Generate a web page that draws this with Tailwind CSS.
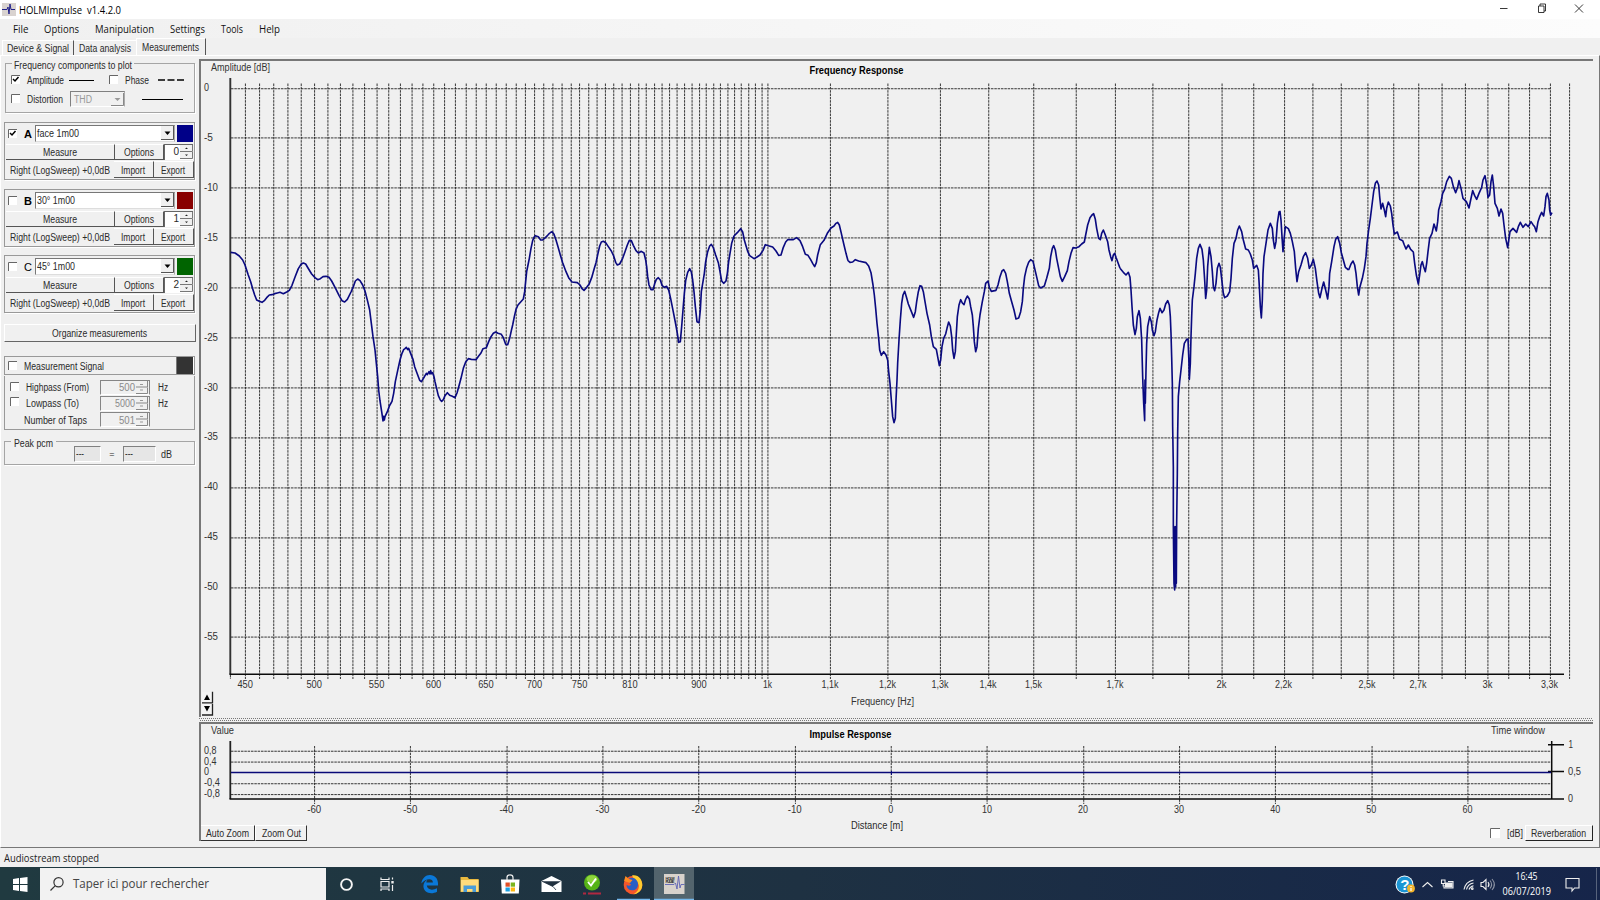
<!DOCTYPE html>
<html lang="fr">
<head>
<meta charset="utf-8">
<title>HOLMImpulse v1.4.2.0</title>
<script src="https://cdn.jsdelivr.net/npm/@tailwindcss/browser@4"></script>
</head>
<body class="w-[1600px] h-[900px] overflow-hidden bg-[#f0f0f0] text-[#2a2a2a] font-['Liberation_Sans',sans-serif] text-[10px] leading-[12px] flex flex-col whitespace-nowrap">

<header class="h-[19px] bg-white flex items-center shrink-0 font-['Open_Sans',sans-serif] text-black">
  <svg class="ml-[2px] w-[14px] h-[13px]" viewBox="0 0 14 13"><rect width="14" height="13" fill="#d9d3d0"/><path d="M0 6.500H5L6 4L7 11L8 1L9 6.500H13" fill="none" stroke="#22228a"/></svg>
  <span data-w="102" class="ml-[3px]">HOLMImpulse&nbsp; v1.4.2.0</span>
  <svg class="ml-auto w-[100px] h-[19px]" viewBox="1500 0 100 19" fill="none" stroke="#222" stroke-width=".9"><path d="M1499.500 8.500h8M1538.500 6h5.500v6.500h-5.500zM1540 6v-2h5.500v7h-1.500M1575 4.500l8 8M1583 4.500l-8 8"/></svg>
</header>

<nav class="h-[19px] shrink-0 flex items-center bg-linear-to-r from-[#f0f0f0] to-[#fcfcfc] font-['Open_Sans',sans-serif] text-[#111] pl-[13px]">
  <span data-w="15.500" class="w-[31px]">File</span><span data-w="35" class="w-[51px]">Options</span><span data-w="59" class="w-[75px]">Manipulation</span><span data-w="35" class="w-[51px]">Settings</span><span data-w="22" class="w-[38px]">Tools</span><span data-w="21">Help</span>
</nav>

<div class="h-[17px] shrink-0 flex items-end pl-[2px]">
  <div class="h-[15px] w-[72px] border-r border-[#555] border-l border-l-white border-t border-t-white pl-[4px] pt-px"><span data-w="62">Device &amp; Signal</span></div>
  <div class="h-[15px] w-[62px] border-t border-white pl-[5px] pt-px"><span data-w="52">Data analysis</span></div>
  <div class="h-[17px] w-[70px] border-r-[1.500px] border-[#555] border-l border-l-white border-t border-t-white pl-[5px] pt-[2px]"><span data-w="57">Measurements</span></div>
</div>

<main class="h-[793px] shrink-0 flex border-t border-white border-l border-l-white border-b-[1.500px] border-b-[#777] border-r-[1.500px] border-r-[#777]">
  <aside class="w-[198px] shrink-0 pl-[4px]">
    <section class="mt-[7px] w-[190px] h-[50px] border border-[#a5a5a5] shadow-[1px_1px_0_#fff] flex flex-col">
      <div class="h-[8px] pl-[6px] flex items-center"><span class="bg-[#f0f0f0] px-[2px] -mt-[7px]"><span data-w="118">Frequency components to plot</span></span></div>
      <div class="h-[16px] flex items-center pl-[5px]">
        <svg class="w-[9px] h-[9px] -mt-px" viewBox="0 0 9 9"><path d="M0 0h9v9H0z" fill="#fff"/><path d="M.5 9V.5H9" fill="none" stroke="#666"/><path d="M2 4l2 2 3.500-4" fill="none" stroke="#000" stroke-width="1.500"/></svg>
        <span data-w="37" class="ml-[7px] w-[42px]">Amplitude</span><i class="w-[25px] h-px bg-black"></i>
        <svg class="w-[9px] h-[9px] ml-[15px] -mt-[2px]" viewBox="0 0 9 9"><path d="M0 0h9v9H0z" fill="#fff"/><path d="M.5 9V.5H9" fill="none" stroke="#666"/></svg>
        <span data-w="24" class="ml-[7px] w-[33px]">Phase</span>
        <svg class="w-[26px] h-[2px]" viewBox="0 0 26 2"><path d="M0 1h26" stroke="#000" stroke-width="1.500" stroke-dasharray="7 2.500"/></svg>
      </div>
      <div class="h-[22px] flex items-center pl-[5px]">
        <svg class="w-[9px] h-[9px] -mt-px" viewBox="0 0 9 9"><path d="M0 0h9v9H0z" fill="#fff"/><path d="M.5 9V.5H9" fill="none" stroke="#666"/></svg>
        <span data-w="36" class="ml-[7px] w-[43px]">Distortion</span>
        <span class="w-[55px] h-[16px] border-[1.500px] border-[#808080] border-b-white border-r-[#aaa] flex items-center text-[#999] pl-[3px]"><span data-w="18">THD</span><svg class="ml-auto w-[13px] h-[13px]" viewBox="0 0 13 13"><path d="M0 12.500h12.500V0" fill="none" stroke="#888"/><path d="M3.500 5h6l-3 3z" fill="#999"/></svg></span>
        <i class="w-[41px] h-px bg-black ml-[17px]"></i>
      </div>
    </section>

    <section class="mt-[9px] -ml-px w-[191px] h-[58px] border border-[#999] shadow-[1px_1px_0_#fff]" data-card="A"></section>
    <section class="mt-[9px] -ml-px w-[191px] h-[58px] border border-[#999] shadow-[1px_1px_0_#fff]" data-card="B"></section>
    <section class="mt-[8px] -ml-px w-[191px] h-[58px] border border-[#999] shadow-[1px_1px_0_#fff]" data-card="C"></section>

    <button class="mt-[11px] -ml-px w-[192px] h-[18px] border-b-[1.500px] border-r-[1.500px] border-[#666] border-t border-t-white border-l border-l-white flex items-center justify-center pr-[2px]"><span data-w="95">Organize measurements</span></button>

    <section class="mt-[14px] -ml-px w-[191px] h-[19px] border border-[#999] flex items-center pl-[3px]">
      <svg class="w-[9px] h-[9px] -mt-px" viewBox="0 0 9 9"><path d="M0 0h9v9H0z" fill="#fff"/><path d="M.5 9V.5H9" fill="none" stroke="#666"/></svg>
      <span data-w="80" class="ml-[7px]">Measurement Signal</span>
      <i class="ml-auto h-[17px] w-[18px] bg-[#333] border-l-[1.500px] border-[#777] border-r border-r-white"></i>
    </section>
    <section class="mt-px -ml-px w-[191px] h-[54px] border border-t-0 border-[#999] flex flex-col pt-[3px]">
      <div class="h-[16px] flex items-center pl-[5px]"><svg class="w-[9px] h-[9px] -mt-[2px]" viewBox="0 0 9 9"><path d="M0 0h9v9H0z" fill="#fff"/><path d="M.5 9V.5H9" fill="none" stroke="#666"/></svg><span data-w="63" class="ml-[7px] w-[74px]">Highpass (From)</span><span class="w-[50px] h-[15px] border-[1.500px] border-[#858585] border-b-white flex items-center justify-end text-[#8a8a8a]"><span data-w="16">500</span><svg class="w-[14px] h-[13px]" viewBox="0 0 14 13"><path d="M1 6h11.500V0M1 12.500h11.500V6.500" fill="none" stroke="#888"/><path d="M5 3.500h3M5 9h3" stroke="#999"/></svg></span><span data-w="10" class="ml-[8px]">Hz</span></div>
      <div class="h-[16px] flex items-center pl-[5px]"><svg class="w-[9px] h-[9px] -mt-[3px]" viewBox="0 0 9 9"><path d="M0 0h9v9H0z" fill="#fff"/><path d="M.5 9V.5H9" fill="none" stroke="#666"/></svg><span data-w="53" class="ml-[7px] w-[74px]">Lowpass (To)</span><span class="w-[50px] h-[15px] border-[1.500px] border-[#858585] border-b-white flex items-center justify-end text-[#8a8a8a]"><span data-w="20">5000</span><svg class="w-[14px] h-[13px]" viewBox="0 0 14 13"><path d="M1 6h11.500V0M1 12.500h11.500V6.500" fill="none" stroke="#888"/><path d="M5 3.500h3M5 9h3" stroke="#999"/></svg></span><span data-w="10" class="ml-[8px]">Hz</span></div>
      <div class="h-[17px] flex items-center pl-[19px]"><span data-w="63" class="w-[76px]">Number of Taps</span><span class="w-[50px] h-[15px] border-[1.500px] border-[#858585] border-b-white flex items-center justify-end text-[#8a8a8a]"><span data-w="16">501</span><svg class="w-[14px] h-[13px]" viewBox="0 0 14 13"><path d="M1 6h11.500V0M1 12.500h11.500V6.500" fill="none" stroke="#888"/><path d="M5 3.500h3M5 9h3" stroke="#999"/></svg></span></div>
    </section>

    <section class="mt-[11px] -ml-px w-[191px] h-[24px] border border-[#a5a5a5] shadow-[1px_1px_0_#fff] flex flex-col">
      <div class="h-[3px] pl-[6px] flex items-center"><span class="bg-[#f0f0f0] px-[3px] -mt-[2px]"><span data-w="39">Peak pcm</span></span></div>
      <div class="h-[17px] flex items-center pl-[69px]">
        <span class="w-[27px] h-[16px] bg-[#e6e6e6] border-[1.500px] border-[#808080] border-b-white border-r-white pl-[1px]"><span data-w="8">---</span></span>
        <span class="w-[22px] text-center pt-px text-[9px]">=</span>
        <span class="w-[33px] h-[16px] bg-[#e6e6e6] border-[1.500px] border-[#808080] border-b-white border-r-white pl-[1px]"><span data-w="8">---</span></span>
        <span data-w="11" class="ml-[5px]">dB</span>
      </div>
    </section>
  </aside>

  <div class="w-[1394px] mt-[3px] flex flex-col">
    <div class="h-[658px] border-t-2 border-l-2 border-[#777]">
      <svg class="block w-[1392px] h-[656px]" viewBox="201 61 1392 656">
        <g id="fgrid" transform="scale(.833333)" stroke="#111" stroke-width="1" fill="none"></g>
        <path d="M230.300 78V674.500" stroke="#333" stroke-width="1.900"/><path d="M229.500 674.300H1564" stroke="#0a0a0a" stroke-width="1.600"/>
        <g fill="none" stroke="#0a0a80" stroke-width="4.900" stroke-linejoin="round">
          <polyline transform="translate(220 210) scale(.33333)" points="32,127 45,129 58,138 68,150 75,165 84,193 92,215 98,236 104,255 110,270 118,274 126,277 134,271 140,263 148,255 156,254 164,251 172,249 180,247 190,251 200,246 208,241 216,226 226,199 235,176 243,163 250,159 257,162 264,174 275,192 285,203 293,209 301,206 309,200 318,199 327,202 335,213 347,236 357,256 366,272 374,276 382,268 393,246 400,230 406,213 413,207 420,212 428,225 435,243 443,274 449,300 454,340 459,380 465,420 469,460 473,500 476,540 480,573 485,605 488,625 489,633 491,619 493,630 495,620 502,605 508,588 516,574 521,550 526,515 533,482 540,450 546,430 551,419 555,416 559,412 563,419 566,415 573,433 579,448 584,470 592,492 599,511 604,515 610,506 615,497 619,490 622,494 627,485 630,492 632,482 635,491 638,488 642,500 645,515 650,536 655,557 661,570 665,574 670,569 675,557 682,548 689,556 697,559 705,563 711,549 717,527 723,505 730,475 737,456 745,446 754,448 768,449 776,438 783,429 789,416 799,413 806,395 813,380 820,370 827,366 834,370 844,373 850,383 857,403 863,404 869,385 874,362 878,345 883,320 888,298 894,285 902,276 910,267 914,245 917,215 920,185 924,165 928,145 933,115 938,92 942,82 946,77 955,80 962,90 968,90 976,83 983,76 990,68"/>
          <polyline transform="translate(500 210) scale(.33333)" points="150,68 156,65 162,73 168,90 174,110 181,135 188,158 198,185 207,205 216,216 232,218 240,225 246,236 252,241 260,232 267,223 275,203 283,175 288,158 294,130 299,108 304,96 310,94 317,98 325,110 334,123 341,138 347,157 352,165 359,162 368,145 375,125 382,105 388,91 394,92 400,106 408,122 415,129 424,124 432,129 437,150 440,170 443,200 447,225 453,239 459,239 464,221 469,208 475,203 481,210 486,226 493,232 500,229 506,240 512,266 519,301 527,342 532,370 536,397 541,395 545,350 549,300 553,250 557,212 563,187 569,176 574,186 578,210 582,245 586,290 591,335 597,338 601,300 604,245 609,215 613,190 617,155 623,125 629,108 634,103 640,113 647,135 655,158 661,190 665,213 671,220 678,213 682,190 686,155 690,130 695,100 702,78 712,68 722,56 728,66 733,90 738,107 743,124 749,137 762,146 771,141 780,135 789,121 796,104 805,107 818,111 828,123 836,136 843,135 850,112 857,96 863,89 880,89 890,83 900,92 908,110 916,133 924,136 932,149 938,160 944,170 949,158 953,135 961,104 972,91 983,68 993,54 1002,48 1008,40 1013,37 1018,45 1024,70 1032,105 1038,130 1044,152"/>
          <polyline transform="translate(800 200) scale(.33333)" points="144,182 150,187 158,186 166,179 176,183 198,188 206,198 213,218 219,255 223,285 227,325 231,370 236,415 239,450 244,466 251,455 258,465 263,480 266,515 270,550 274,600 278,650 282,668 286,655 288,600 291,540 293,490 297,420 301,360 305,310 309,285 314,274 319,290 325,312 333,332 341,352 346,335 350,305 355,275 360,257 365,259 370,275 375,305 381,340 389,375 394,410 400,440 409,448 414,475 418,497 422,480 426,440 431,415 437,402 441,385 446,366 451,378 455,410 458,450 462,475 466,455 469,400 472,350 477,315 482,299 487,309 492,314 497,298 502,288 508,297 512,320 517,345 520,380 523,425 527,455 531,440 535,385 540,345 547,305 553,275 557,250 564,243 568,262 574,274 588,271 594,255 600,230 606,213 611,209 617,220 622,245 628,280 635,305 642,330 648,357 656,354 662,335 667,305 670,265 674,230 680,203 686,187 692,179 699,184 704,205 711,235 716,257 722,264 733,258 740,235 748,205 752,170 757,145 761,137 766,150 770,175 776,205 781,230 787,244 794,230 802,212 807,185 813,160 819,143 827,144 837,140 845,132 853,126 857,105 863,75 870,53 876,45 881,41 886,58 890,85 896,115 901,119 905,100 910,90 916,105 923,125 927,150 932,170 936,182 940,165 944,160 948,172 960,205"/>
          <polyline transform="translate(1080 190) scale(.33333)" points="120,235 130,247 138,255 145,247 150,262 153,300 156,350 160,405 165,434 169,415 172,380 177,362 181,385 185,450 188,560 191,640 194,692 195,570 196,640 198,540 200,460 203,410 209,380 214,395 217,420 222,437 226,425 231,390 236,368 240,355 246,368 252,360 257,342 263,332 268,345 271,380 273,430 275,500 277,580 278,710 280,830 280,1010 282,1180 284,1200 285,1010 287,1190 288,1010 289,1180 290,1000 292,850 293,730 295,620 299,575 303,540 308,495 313,460 320,448 324,447 327,520 328,568 331,520 333,440 335,380 337,330 342,290 346,250 350,205 355,175 360,163 366,178 370,210 374,270 377,325 380,300 383,230 388,172 393,200 397,245 400,290 404,302 408,280 412,235 417,220 421,232 426,275 430,310 434,323 442,318 449,305 453,265 457,205 462,160 468,145 473,120 478,108 485,125 490,150 497,177 505,180 511,192 517,210 521,235 530,226 535,240 538,290 541,350 544,384 547,330 549,250 552,200 558,160 564,120 571,100 577,115 580,150 584,175 588,155 592,100 597,66 600,64 603,90 606,140 609,185 612,150 616,110 625,116 631,130 637,155 643,185 647,235 651,275 656,245 663,225 670,200 677,188 683,205 688,235 694,225 700,208 706,235 711,275 716,310 720,323 726,295 731,276 737,300 743,327 747,290 749,250 755,215 762,170 767,148 773,140 779,160 784,188 790,210 796,232 806,240"/>
          <polyline transform="translate(1300 150) scale(.33333)" points="146,360 153,342 159,333 164,345 168,370 172,410 176,435 180,410 187,385 193,355 198,320 201,280 206,240 211,205 216,165 221,125 226,100 231,93 236,105 239,140 243,177 248,160 253,180 257,200 260,175 265,156 271,168 275,190 279,225 283,252 292,246 299,268 308,272 313,285 318,297 325,285 332,298 340,306 344,340 349,375 355,402 359,375 363,345 367,335 371,350 376,365 380,340 384,305 389,265 396,250 402,222 409,243 413,215 416,180 423,155 428,130 434,118 440,95 448,79 454,85 460,110 467,128 473,112 477,92 483,115 489,145 499,155 507,174 512,150 518,122 524,137 530,148 537,130 545,112 549,90 555,77 560,105 564,142 569,135 573,95 577,75 581,110 585,160 592,175 597,198 603,177 608,190 612,225 617,265 623,293 627,265 630,245 639,235 650,247 655,230 661,217 669,232 677,222 685,230 693,215 699,224 704,230 709,245 714,215 719,200 725,187 731,198 735,170 738,140 742,130 747,150 749,180 752,195 756,188"/>
        </g>
        <g id="flabels" font-size="10" fill="#333"></g>
        <g fill="#333" font-size="10">
          <text x="211" y="70.500" textLength="59" lengthAdjust="spacingAndGlyphs">Amplitude [dB]</text>
          <text x="851" y="704.500" textLength="63" lengthAdjust="spacingAndGlyphs">Frequency [Hz]</text>
          <text x="809.500" y="74.300" font-weight="bold" fill="#000" textLength="94" lengthAdjust="spacingAndGlyphs">Frequency Response</text>
        </g>
        <g><path d="M202 692h10v11h-10zM202 704h10v11h-10z" fill="#f4f4f4"/><path d="M202 702.800h10.500v-11M202 715h10.500v-11" fill="none" stroke="#222" stroke-width="1.300"/><path d="M207 694.500l3 5.500h-6zM207 711.500l3-5.500h-6z" fill="#000"/></g>
      </svg>
    </div>
    <svg class="block w-[1394px] h-[5px]" viewBox="0 0 1394 5"><path d="M0 1.500h1394M1 3.500h1393" stroke="#777" stroke-width="1" stroke-dasharray="1 1"/></svg>
    <div class="h-[119px] border-t-2 border-l-2 border-[#777] flex flex-col">
      <svg class="block w-[1392px] h-[101px] shrink-0" viewBox="201 724 1392 101">
        <g id="igrid" transform="scale(.833333)" stroke="#111" fill="none"></g>
        <path d="M230.300 741V799" stroke="#222" stroke-width="1.800"/><path d="M229.500 799H1564M1551.700 741V799M1548 744.700H1564M1548 771.500H1564" fill="none" stroke="#0a0a0a" stroke-width="1.500"/>
        <path d="M231 772.500H1551" stroke="#0a0a78" stroke-width="1.400"/><path d="M891.500 771v4" stroke="#0a0a78"/>
        <g id="ilabels" font-size="10" fill="#333"></g>
        <g fill="#333" font-size="10">
          <text x="211" y="733.500" textLength="23" lengthAdjust="spacingAndGlyphs">Value</text>
          <text x="1491" y="733.500" textLength="54" lengthAdjust="spacingAndGlyphs">Time window</text>
          <text x="809.500" y="737.500" font-weight="bold" fill="#000" textLength="82" lengthAdjust="spacingAndGlyphs">Impulse Response</text>
        </g>
      </svg>
      <div class="h-[16px] flex items-center">
        <span class="w-[54px] h-[16px] border-b-[1.500px] border-r border-[#333] border-t border-t-white flex items-center justify-center"><span data-w="43">Auto Zoom</span></span>
        <span class="w-[52px] h-[16px] border-b-[1.500px] border-r-[1.500px] border-[#333] border-t border-t-white border-l border-l-white flex items-center justify-center"><span data-w="39">Zoom Out</span></span>
        <span data-w="52" class="ml-[544px] -mt-[16px]">Distance [m]</span>
        <svg class="w-[10px] h-[10px] ml-auto -mt-px" viewBox="0 0 10 10"><path d="M0 0h10v10H0z" fill="#fff"/><path d="M.5 10V.5H10" fill="none" stroke="#666"/></svg>
        <span data-w="16" class="ml-[7px]">[dB]</span>
        <span class="ml-[2px] w-[68px] h-[16px] border-b-[1.500px] border-r-[1.500px] border-[#222] border-t border-t-white border-l border-l-white flex items-center justify-center pr-px"><span data-w="55">Reverberation</span></span>
      </div>
    </div>
  </div>
</main>

<footer class="h-[19px] shrink-0 flex items-center pl-[4px] font-['Open_Sans',sans-serif] text-[#222]"><span data-w="95">Audiostream stopped</span></footer>

<div class="h-[34px] w-[1600px] shrink-0 flex items-center bg-linear-to-r from-[#203a40] via-[#1e3142] to-[#16254a]">
  <div class="w-[40px] flex justify-center"><svg class="w-[15px] h-[15px]" viewBox="0 0 15 15" fill="#fff"><path d="M0 2l6-1v6H0zM7 1l7.500-1v7H7zM0 8h6v6l-6-1zM7 8h7.500v7L7 14z"/></svg></div>
  <div class="w-[286px] h-[33px] bg-[#f2f2f2] flex items-center pl-[10px] font-['Open_Sans',sans-serif] text-[12.500px] text-[#444]"><svg class="w-[14px] h-[14px]" viewBox="0 0 14 14" fill="none" stroke="#333" stroke-width="1.200"><circle cx="8.500" cy="5.300" r="4.600"/><path d="M5.300 8.700L.5 13.500"/></svg><span data-w="136" class="ml-[9px] -mt-[2px]">Taper ici pour rechercher</span></div>
  <svg class="w-[1274px] h-[34px]" viewBox="326 866 1274 34">
    <rect x="654" y="866" width="40" height="34" fill="#53646d"/><path d="M617 898.900h33M654 898.900h40" stroke="#76b9ed" stroke-width="2.200"/>
    <circle cx="346.500" cy="883.500" r="5.400" fill="none" stroke="#f4f4f4" stroke-width="1.900"/>
    <path d="M381 876.500v2h8v-2M381 890v-2h8v2M381 880.500h8v5.500h-8zM392.500 876.500v2M392.500 884v6" fill="none" stroke="#eee" stroke-width="1.200"/><rect x="391.300" y="880" width="2.400" height="2.500" fill="#eee"/>
    <path d="M421.300 882.500C422.300 876.800 426 873.800 430 874c5 .2 7.800 3.500 8 8.300v2.300h-11.200c.4 4.600 6.200 5 10.200 2.600v3.500c-5.700 3.100-13.300 1.300-13.600-5.400-.1-3.200 1.800-5.400 4-6.600-.7 1-1 1.900-1.100 2.900h6.600c0-5-7.600-4-11.600.9z" fill="#0a78d8"/>
    <path d="M460.500 876h7l1.500 2h9.700v13h-18.200z" fill="#e9b93f"/><path d="M461 879h17.500v11.500H461z" fill="#ffdb7d"/><path d="M463.500 891v-6.500h12.500v6.500h-3.500v-3h-5.500v3z" fill="#4a9cd8"/>
    <path d="M501 878.500h18.500l-.7 14h-17z" fill="#fff"/><path d="M507 879v-2.500c0-3.500 6-3.500 6 0v2.500" fill="none" stroke="#eee" stroke-width="1.200"/><path d="M505.500 881.500h4.300v4.200h-4.300z" fill="#e34f26"/><path d="M510.700 881.500h4.300v4.200h-4.300z" fill="#7ab51d"/><path d="M505.500 886.500h4.300v4h-4.300z" fill="#1ba0e2"/><path d="M510.700 886.500h4.300v4h-4.300z" fill="#fdb813"/>
    <path d="M541.500 880l10-5 10 5v11h-20z" fill="#fff"/><path d="M542 880.300h19l-8.500 5.200z" fill="#20303f"/><path d="M542 880.300l11 5.200 3 3.500" fill="none" stroke="#20303f" stroke-width=".8"/>
    <circle cx="592" cy="881.500" r="8" fill="#55b317"/><ellipse cx="592" cy="878" rx="5.500" ry="3.800" fill="#8fd53d"/><path d="M588 881l3 3.500 5-7" fill="none" stroke="#fff" stroke-width="1.900"/><path d="M583 892.500h3M588 892.500h13" stroke="#b02840" stroke-width="1.800"/>
    <circle cx="633" cy="884" r="9.300" fill="#f5562b"/><path d="M632 874.500c6-1.500 10.500 4 10.300 9.800-.3 5-4 8.700-9 9 4-2 6-5.300 5.500-9-.6-4-4.800-5.600-6.800-9.800z" fill="#ffcb2e"/><path d="M629 877.500c5-2.300 9.300 2 9 6.200-.3 4-3.300 6-6.300 5.600-3.500-.4-5.500-3-5-5.600 1.500 1.500 3.200 1.200 4.500 0-2-1-3.200-3.500-2.200-6.200z" fill="#2b5fc4"/><path d="M624 880l1.500-5 3.500 3 3.500 1-2.500 3z" fill="#ff8a20"/>
    <rect x="664" y="873" width="20.500" height="20" fill="#d8d2cc"/><path d="M665 883.500h9l1.500-1.500 1.500 6 1.500-13 1.500 12 1-3.500h3.500" fill="none" stroke="#5c62b4" stroke-width=".9"/>
    <text x="665.500" y="878.500" font-size="4" font-weight="bold" fill="#333" textLength="9">HOLM</text><text x="665.500" y="882.200" font-size="4" font-weight="bold" fill="#333" textLength="9">PULSE</text>
    <circle cx="1404.500" cy="883.500" r="9" fill="#fff"/><circle cx="1404.500" cy="883.500" r="8" fill="#1b95d4"/><text x="1400.300" y="889" font-size="15" font-weight="bold" fill="#fff">?</text><circle cx="1411" cy="887.500" r="3.900" fill="#f5b52a"/><path d="M1411 885v1M1411 887v3" stroke="#fff" stroke-width="1.200"/>
    <g fill="none" stroke="#eee" stroke-width="1.100"><path d="M1422.500 886l5-4.500 5 4.500"/><path d="M1448 880.500h5v6.500h-9v-3"/><path d="M1445.500 882h6.500v4h-6.500z" fill="#eee"/><path d="M1441.500 879h3.500v3.500h-3.500zM1443.200 882.500v3"/>
    <path d="M1464 888.500c1-5 4.500-8.500 9.500-9.500M1466.500 888.500c.8-3.500 3.500-6 7-6.500M1469 888.500c.7-2 2-3.300 4.500-3.800" /><circle cx="1472.300" cy="887.700" r=".8"/>
    <path d="M1481 881.500h2l3-3v10l-3-3h-2zM1488 881c1.200 1.500 1.200 3.500 0 5"/><path d="M1490 879.500c2 2.500 2 5.500 0 8M1492 878c3 3.500 3 7.500 0 11" opacity=".55"/><path d="M1566 877.500h13v9.500h-4.500l-2.500 3v-3h-6z"/></g>
    <path d="M1596.500 867v33" stroke="#57637c"/>
    <g fill="#fff" font-size="10" font-family="Open Sans, sans-serif"><text x="1515.500" y="878.700" textLength="22" lengthAdjust="spacingAndGlyphs">16:45</text><text x="1502.500" y="893.700" textLength="48.500" lengthAdjust="spacingAndGlyphs">06/07/2019</text></g>
  </svg>
</div>

<template id="card">
  <div class="h-[20px] flex items-center pl-[3px]">
    <svg class="w-[9px] h-[9px]" viewBox="0 0 9 9"><path d="M0 0h9v9H0z" fill="#fff"/><path d="M.5 9V.5H9" fill="none" stroke="#666"/><path class="tick" d="M2 4l2 2 3.500-4" fill="none" stroke="#000" stroke-width="1.500"/></svg>
    <span class="letter ml-[7px] w-[11px] text-[11px] text-black pt-px"></span>
    <span class="w-[140px] h-[17px] bg-white border-[1.500px] border-[#777] border-r-[#aaa] border-b-[#ddd] flex items-center pl-px"><span class="name"></span><svg class="ml-auto w-[13px] h-[14px]" viewBox="0 0 13 14"><path d="M0 0h13v14H0z" fill="#f0f0f0"/><path d="M0 13.500h12.500V0" fill="none" stroke="#555"/><path d="M3.500 5.500h6l-3 3.500z" fill="#000"/></svg></span>
    <svg class="ml-[2px] w-[16px] h-[17px]" viewBox="0 0 16 17"><rect class="swatch" width="16" height="17"/></svg>
  </div>
  <div class="h-[17px] flex items-center pl-[1px]">
    <span class="w-[109px] h-[16px] border-b-[1.500px] border-r-[1.500px] border-[#555] border-t border-t-white flex items-center justify-center"><span data-w="34">Measure</span></span>
    <span class="w-[49px] h-[16px] border-b-[1.500px] border-r-[1.500px] border-[#555] border-t border-t-white flex items-center justify-center pr-px"><span data-w="30">Options</span></span>
    <span class="w-[29px] h-[16px] bg-white border-l-[1.500px] border-t-[1.500px] border-[#666] flex items-center justify-end"><span class="num mr-[1px]"></span><svg class="w-[13px] h-[14px]" viewBox="0 0 13 14"><path d="M0 0h13v14H0z" fill="#f0f0f0"/><path d="M0 6.500h12.500V0M0 13.500h12.500V7" fill="none" stroke="#777"/><path d="M5 4h3l-1.500-1.500zM5 9.500h3L6.500 11z" fill="#222"/></svg></span>
  </div>
  <div class="h-[19px] flex items-center pl-[5px]">
    <span data-w="100" class="w-[104px]">Right (LogSweep) +0,0dB</span>
    <span class="w-[39.500px] h-[17px] border-b-[1.500px] border-r-[1.500px] border-[#555] border-t border-t-white flex items-center justify-center"><span data-w="24">Import</span></span>
    <span class="w-[40px] h-[17px] border-b-[1.500px] border-r-[1.500px] border-[#555] border-t border-t-white flex items-center justify-center"><span data-w="24">Export</span></span>
  </div>
</template>

<script>
const cards = {
  A: ['face 1m00', '#000088', '0', 42, true], B: ['30° 1m00', '#880000', '1', 38, false], C: ['45° 1m00', '#006400', '2', 38, false]
};
for (const el of document.querySelectorAll('[data-card]')) {
  const k = el.dataset.card, [name, color, num, w, on] = cards[k];
  el.append(document.getElementById('card').content.cloneNode(true));
  el.querySelector('.letter').textContent = k;
  if (k !== 'C') el.querySelector('.letter').style.fontWeight = 'bold';
  el.querySelector('.name').textContent = name;
  el.querySelector('.name').dataset.w = w;
  el.querySelector('.num').textContent = num;
  el.querySelector('.swatch').setAttribute('fill', color);
  if (!on) el.querySelector('.tick').remove();
}
// Labels with a fixed width: the text is fitted to data-w pixels.
for (const s of document.querySelectorAll('span[data-w]')) {
  const w = s.dataset.w, text = s.innerHTML;
  s.innerHTML = `<svg class="block overflow-visible h-[12px]" width="${w}" height="12" fill="currentColor"><text x="0" y="6.3" dominant-baseline="central" textLength="${w}" lengthAdjust="spacingAndGlyphs" xml:space="preserve">${text}</text></svg>`;
}
const S = 0.833333, px = v => Math.round(v / S - 0.5) + 0.5;
const v = (x, a, b) => `<path d="M${px(x)} ${a / S}V${b / S}" stroke-dasharray="3 1"/>`;
const h = (y, a, b) => `<path d="M${a / S} ${px(y)}H${b / S}" stroke-dasharray="3 1"/>`;
const label = (t, x, y, a, w) => `<text x="${x}" y="${y}" text-anchor="${a}" textLength="${w}" lengthAdjust="spacingAndGlyphs">${t}</text>`;
const fx = f => 768.3 + 654.6 * Math.log(f / 1000);
let g = v(230.6, 675, 679), t = '';
for (let f = 450; f <= 1000; f += 10) g += v(fx(f), 83.5, 679);
const high = [830.5, 888, 940.5, 988.7, 1033.7, 1076.3, 1115.5, 1153, 1188.7, 1222.3, 1253.7, 1284.5, 1313.3, 1341.3, 1367.7, 1393.5, 1418.5, 1442.3, 1465.3, 1488, 1508.6, 1529.5, 1550.6, 1569.5];
for (const x of high) g += v(x, 83.5, 679);
for (let i = 0; i <= 11; i++) {
  const y = 88.4 + i * 49.91;
  g += h(y, 231, 1551);
  t += label(i ? -5 * i : 0, 204, y + 2.7, 'start', i > 1 ? 14 : i ? 9 : 5);
}
for (const f of [450, 500, 550, 600, 650, 700, 750, 810, 900]) t += label(f, fx(f) - 0.4, 688.4, 'middle', 15.5);
for (const [s, x, w] of [['1k', 767.5, 9], ['1,1k', 830, 17], ['1,2k', 887.5, 17], ['1,3k', 940, 17], ['1,4k', 988, 17], ['1,5k', 1033.5, 17], ['1,7k', 1115, 17], ['2k', 1221.5, 10], ['2,2k', 1283.5, 17], ['2,5k', 1367, 17], ['2,7k', 1418, 17], ['3k', 1487.5, 10], ['3,3k', 1549.5, 17]]) t += label(s, x, 688.4, 'middle', w);
document.getElementById('fgrid').innerHTML = g;
document.getElementById('flabels').innerHTML = t;
g = ''; t = '';
for (const [s, y, w] of [['0,8', 751.2, 12.5], ['0,4', 762, 12.5], ['0', 772.4, 5], ['-0,4', 783.4, 16], ['-0,8', 794.3, 16]]) {
  if (s !== '0') g += h(y, 231, 1551);
  t += label(s, 204, y + 2.5, 'start', w);
}
for (let i = -6; i <= 6; i++) {
  const x = 891.3 + i * 96.1;
  g += v(x, 746, 804);
  t += label(i * 10, x - 0.5, 813.4, 'middle', i < 0 ? 14 : i ? 10 : 5);
}
t += label('1', 1568.5, 748, 'start', 4.5) + label('0,5', 1568, 774.5, 'start', 13) + label('0', 1568, 801.5, 'start', 5);
document.getElementById('igrid').innerHTML = g;
document.getElementById('ilabels').innerHTML = t;
</script>
</body>
</html>
